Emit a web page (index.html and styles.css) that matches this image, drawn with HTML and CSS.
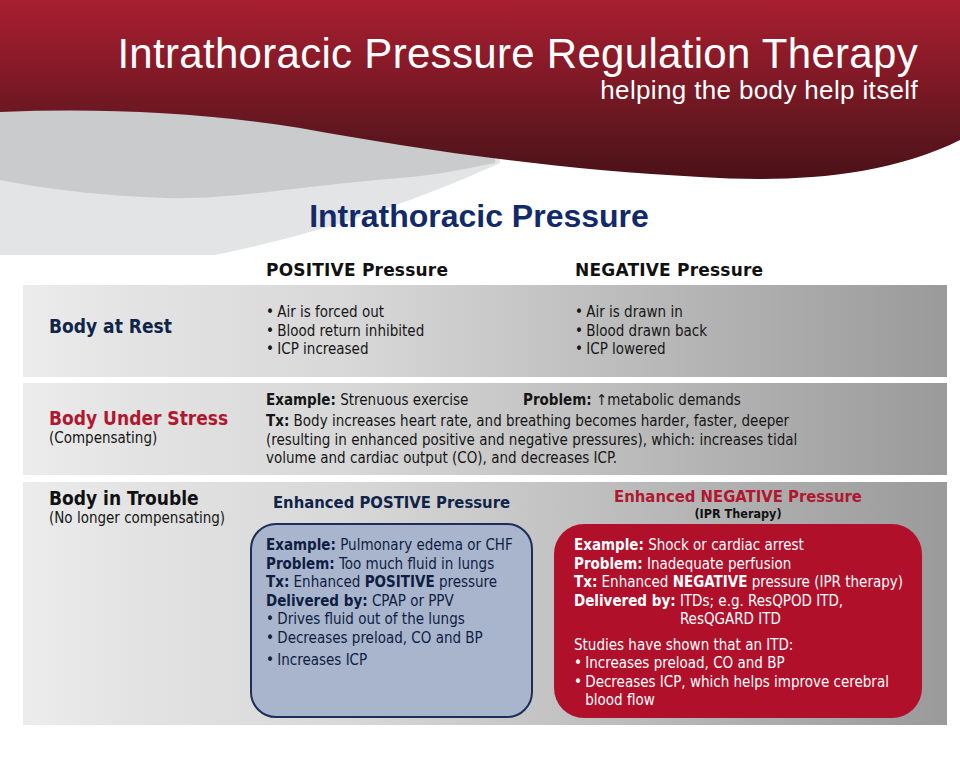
FILE: index.html
```html
<!DOCTYPE html>
<html lang="en">
<head>
<meta charset="utf-8">
<title>Intrathoracic Pressure Regulation Therapy</title>
<link rel="stylesheet" href="styles.css">
</head>
<body>
<div class="slide">
  <header class="top">
    <svg class="top-bg" viewBox="0 0 960 255" preserveAspectRatio="none" aria-hidden="true">
      <defs>
        <linearGradient id="redGrad" x1="0" y1="0" x2="0" y2="1">
          <stop offset="0" stop-color="#a81f31"/>
          <stop offset="0.35" stop-color="#891a28"/>
          <stop offset="0.7" stop-color="#641720"/>
          <stop offset="1" stop-color="#4b1117"/>
        </linearGradient>
      </defs>
      <path d="M0,100 H500 V163 C450,185 360,225 215,255 H0 Z" fill="#e3e4e6"/>
      <path d="M0,100 H495 V163 C460,170 430,176 400,178 C300,186 230,200 167,198 C100,196 40,188 0,180 Z" fill="#c9cbcd"/>
      <path d="M0,0 H960 V140 C880,180 780,182 700,177 C560,170 420,150 300,128 C200,112 100,108 0,112 Z" fill="url(#redGrad)"/>
    </svg>
    <h1 class="title">Intrathoracic Pressure Regulation Therapy</h1>
    <p class="tagline">helping the body help itself</p>
    <h2 class="subject">Intrathoracic Pressure</h2>
  </header>

  <section class="chart">
    <div class="col-heads">
      <div class="col-pos">POSITIVE Pressure</div>
      <div class="col-neg">NEGATIVE Pressure</div>
    </div>

    <div class="row row-rest">
      <div class="label">
        <div class="label-main navy">Body at Rest</div>
      </div>
      <ul class="bullets col-pos">
        <li>Air is forced out</li>
        <li>Blood return inhibited</li>
        <li>ICP increased</li>
      </ul>
      <ul class="bullets col-neg">
        <li>Air is drawn in</li>
        <li>Blood drawn back</li>
        <li>ICP lowered</li>
      </ul>
    </div>

    <div class="row row-stress">
      <div class="label">
        <div class="label-main red">Body Under Stress</div>
        <div class="label-sub">(Compensating)</div>
      </div>
      <div class="stress-body">
        <div class="stress-top">
          <div><b>Example:</b> Strenuous exercise</div>
          <div><b>Problem:</b> ↑metabolic demands</div>
        </div>
        <p class="stress-tx"><b>Tx:</b> Body increases heart rate, and breathing becomes harder, faster, deeper<br>(resulting in enhanced positive and negative pressures), which: increases tidal<br>volume and cardiac output (CO), and decreases ICP.</p>
      </div>
    </div>

    <div class="row row-trouble">
      <div class="label label-top">
        <div class="label-main">Body in Trouble</div>
        <div class="label-sub">(No longer compensating)</div>
      </div>

      <div class="group group-pos">
        <div class="group-head">
          <div class="group-title navy">Enhanced POSTIVE Pressure</div>
        </div>
        <div class="box box-blue">
          <div><b>Example:</b> Pulmonary edema or CHF</div>
          <div><b>Problem:</b> Too much fluid in lungs</div>
          <div><b>Tx:</b> Enhanced <b>POSITIVE</b> pressure</div>
          <div><b>Delivered by:</b> CPAP or PPV</div>
          <div class="bl">Drives fluid out of the lungs</div>
          <div class="bl">Decreases preload, CO and BP</div>
          <div class="bl spaced">Increases ICP</div>
        </div>
      </div>

      <div class="group group-neg">
        <div class="group-head">
          <div class="group-title red">Enhanced NEGATIVE Pressure</div>
          <div class="group-sub">(IPR Therapy)</div>
        </div>
        <div class="box box-red">
          <div><b>Example:</b> Shock or cardiac arrest</div>
          <div><b>Problem:</b> Inadequate perfusion</div>
          <div><b>Tx:</b> Enhanced <b>NEGATIVE</b> pressure (IPR therapy)</div>
          <div class="deliv"><b>Delivered by:</b>&nbsp;<span class="deliv-val">ITDs; e.g. ResQPOD ITD,<br>ResQGARD ITD</span></div>
          <div class="studies">Studies have shown that an ITD:</div>
          <div class="bl">Increases preload, CO and BP</div>
          <div class="bl">Decreases ICP, which helps improve cerebral<br>blood flow</div>
        </div>
      </div>
    </div>
  </section>
</div>
</body>
</html>
```

FILE: styles.css
```css
html, body {
  margin: 0;
  padding: 0;
  background: #ffffff;
}

.slide {
  width: 960px;
  height: 768px;
  overflow: hidden;
  background: #ffffff;
  font-family: "DejaVu Sans Condensed", "DejaVu Sans", sans-serif;
  font-stretch: semi-condensed;
  color: #161616;
}

/* ---------- header ---------- */
.top {
  position: relative;
  height: 255px;
  display: flex;
  flex-direction: column;
}

.top-bg {
  position: absolute;
  left: 0;
  top: 0;
  width: 960px;
  height: 255px;
  z-index: 0;
}

.title,
.tagline,
.subject {
  position: relative;
  z-index: 1;
  margin: 0;
}

.title {
  padding: 32px 42px 0 0;
  text-align: right;
  font-family: "Liberation Sans", Arial, sans-serif;
  font-weight: normal;
  font-size: 42px;
  letter-spacing: 0.3px;
  line-height: 44px;
  color: #ffffff;
}

.tagline {
  padding-right: 42px;
  text-align: right;
  font-family: "Liberation Sans", Arial, sans-serif;
  font-size: 26px;
  letter-spacing: 0.35px;
  line-height: 28px;
  color: #ffffff;
}

.subject {
  margin-top: 94px;
  text-align: center;
  padding-right: 2px;
  font-family: "Liberation Sans", Arial, sans-serif;
  font-weight: bold;
  font-size: 32px;
  line-height: 36px;
  color: #12296a;
}

/* ---------- chart ---------- */
.chart {
  padding-left: 23px;
}

.col-heads {
  display: flex;
  height: 30px;
  align-items: center;
  padding-left: 243px;
  font-family: "DejaVu Sans", sans-serif;
  font-stretch: normal;
  font-weight: bold;
  font-size: 17px;
  letter-spacing: 0.2px;
  color: #111111;
}

.col-heads .col-pos {
  width: 309px;
}

.row {
  width: 924px;
  display: flex;
  background: linear-gradient(90deg, #ececec 0%, #e3e3e3 12%, #d8d8d8 35%, #bcbcbc 65%, #9a9a9a 100%);
  font-size: 15px;
  line-height: 18.5px;
}

.row-rest {
  height: 92px;
  align-items: center;
}

.row-stress {
  height: 92px;
  margin-top: 6px;
  align-items: center;
}

.row-trouble {
  height: 243px;
  margin-top: 7px;
}

.label {
  box-sizing: border-box;
  width: 243px;
  padding-left: 26px;
}

.label-main {
  font-weight: bold;
  font-size: 19px;
  line-height: 22px;
  color: #111111;
}

.label-sub {
  font-size: 15px;
  line-height: 18px;
}

.navy { color: #0f2448; }
.red { color: #b0182f; }

.row-rest .label {
  margin-top: -10px;
}

.row-stress .label {
  margin-top: -4px;
}

.bullets {
  list-style: none;
  margin: 0;
  padding: 0;
}

.bullets li::before,
.bl::before {
  content: "•";
  display: inline-block;
  width: 0.75em;
}

.bullets.col-pos {
  width: 309px;
}

.stress-body {
  display: flex;
  flex-direction: column;
}

.stress-top {
  display: grid;
  grid-template-columns: 257px auto;
  line-height: 20px;
  margin-bottom: 2px;
}

.stress-tx {
  margin: 0;
}

/* ---------- trouble row ---------- */
.label-top {
  width: 227px;
  padding-top: 5px;
}

.group {
  display: flex;
  flex-direction: column;
}

.group-pos {
  width: 283px;
}

.group-neg {
  width: 368px;
  margin-left: 21px;
}

.group-head {
  height: 41px;
  display: flex;
  flex-direction: column;
  justify-content: center;
  align-items: center;
}

.group-title {
  font-weight: bold;
  font-size: 16.5px;
  line-height: 18px;
}

.group-neg .group-head {
  justify-content: flex-start;
  padding-top: 6px;
  height: 35px;
}

.group-sub {
  font-weight: bold;
  font-size: 12.5px;
  line-height: 15px;
  color: #111111;
}

.box {
  box-sizing: border-box;
  height: 195px;
}

.box-blue {
  background: #a9b4cd;
  border: 2px solid #1b2f57;
  border-radius: 26px;
  padding: 11px 10px 0 14px;
  color: #0d1e42;
}

.box-blue .spaced {
  margin-top: 4px;
}

.box-red {
  background: #b1102b;
  border-radius: 30px;
  padding: 12px 10px 0 20px;
  color: #ffffff;
  height: 194px;
  margin-top: 1px;
}

.deliv {
  display: flex;
}

.deliv-val {
  display: block;
}

.studies {
  margin-top: 7px;
}

.box-red .bl {
  display: flex;
}

.box-red .bl::before {
  flex: none;
}
```
